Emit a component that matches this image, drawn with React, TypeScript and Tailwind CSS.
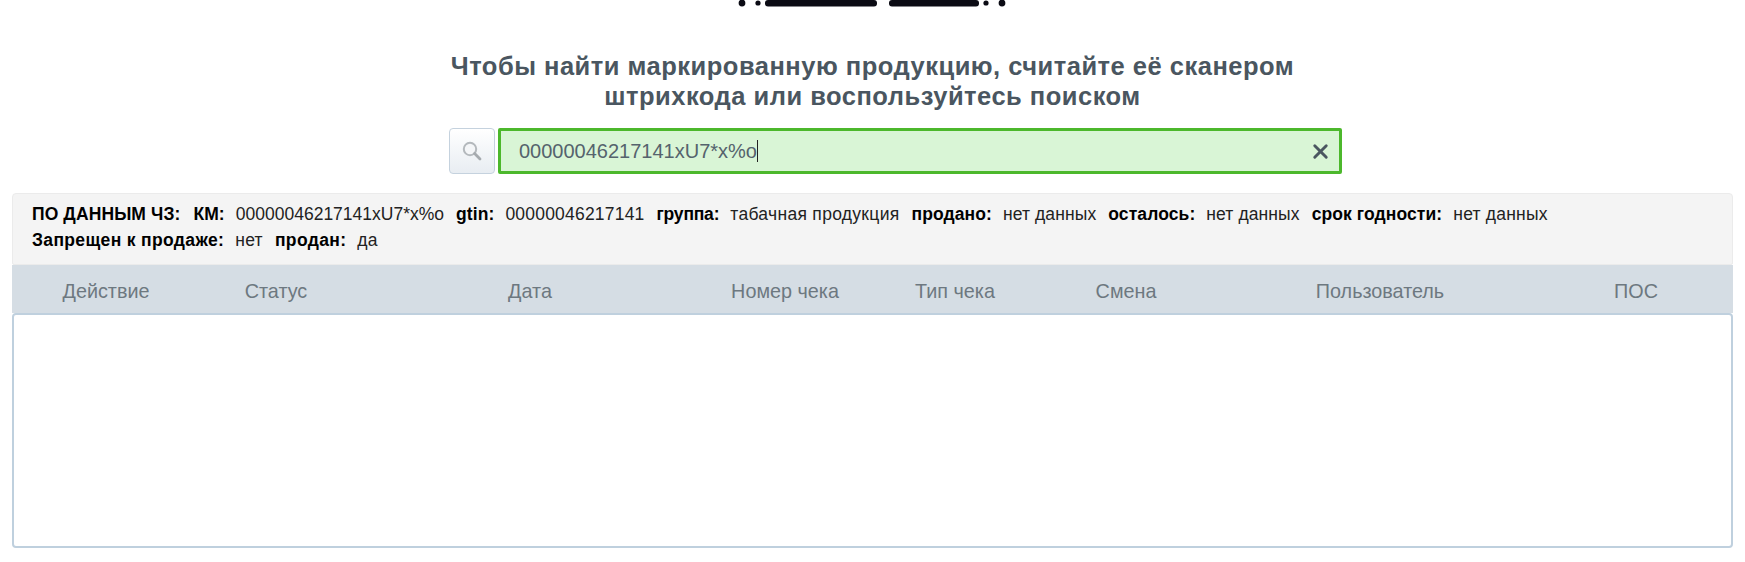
import { X } from "lucide-react";

const columns = ["Действие", "Статус", "Дата", "Номер чека", "Тип чека", "Смена", "Пользователь", "ПОС"];

const infoRow1 = [
  { label: "КМ:", value: "00000046217141xU7*x%o", valueClass: "tracking-[0px]" },
  { label: "gtin:", value: "00000046217141", valueClass: "tracking-[0.2px]" },
  { label: "группа:", value: "табачная продукция", valueClass: "tracking-[0.3px]", labelClass: "tracking-[-0.2px]" },
  { label: "продано:", value: "нет данных", valueClass: "tracking-[0.1px]" },
  { label: "осталось:", value: "нет данных", valueClass: "tracking-[0.1px]" },
  { label: "срок годности:", value: "нет данных", valueClass: "tracking-[0.2px]" },
];

const infoRow2 = [
  { label: "Запрещен к продаже:", value: "нет", valueClass: "tracking-[0.3px]" },
  { label: "продан:", value: "да", valueClass: "tracking-[0.3px]" },
];

function Logo() {
  return (
    <svg width="270" height="7" viewBox="0 0 270 7" className="mx-auto block">
      <circle cx="4" cy="3" r="3.4" fill="#0b0b14" />
      <circle cx="20" cy="3" r="2.6" fill="#0b0b14" />
      <rect x="27" y="0" width="112" height="6.4" rx="3" fill="#0b0b14" />
      <rect x="151" y="0" width="90" height="6.4" rx="3" fill="#0b0b14" />
      <circle cx="248" cy="3" r="2.6" fill="#0b0b14" />
      <circle cx="264" cy="3" r="3.4" fill="#0b0b14" />
    </svg>
  );
}

function Pair({ label, value, valueClass, labelClass }: { label: string; value: string; valueClass: string; labelClass?: string }) {
  return (
    <span className="mr-[12px]">
      <b className={`mr-[11px] font-bold text-black ${labelClass ?? ""}`}>{label}</b>
      <span className={valueClass}>{value}</span>
    </span>
  );
}

export default function App() {
  return (
    <div className="h-[562px] overflow-hidden bg-white font-['Liberation_Sans',Arial,sans-serif]">
      <Logo />
      <h2 className="mt-[44px] text-center text-[25.5px] leading-[30px] font-bold tracking-[0.5px] text-[#4a5660]">
        Чтобы найти маркированную продукцию, считайте её сканером
        <br />
        штрихкода или воспользуйтесь поиском
      </h2>

      <div className="mt-[17px] flex justify-center gap-[3px] pl-[46px]">
        <button className="flex h-[46px] w-[46px] items-center justify-center rounded-[4px] border border-[#c5d2de] bg-gradient-to-b from-[#ffffff] to-[#e8edf2]">
          <svg width="22" height="22" viewBox="0 0 22 22" fill="none">
            <circle cx="9" cy="9" r="6.2" stroke="#b4b9bd" strokeWidth="2" fill="#f4f6f8" />
            <path d="M13.6 13.6L19 19" stroke="#a6abaf" strokeWidth="2.8" strokeLinecap="round" />
          </svg>
        </button>
        <div className="flex h-[46px] w-[844px] items-center rounded-[2px] border-[3px] border-[#4cb82c] bg-[#d9f5d6] pl-[18px] pr-[7px]">
          <span className="text-[20px] leading-none text-[#55636d]">00000046217141xU7*x%o</span>
          <span className="h-[22px] w-px bg-[#222222]" />
          <X size={23} strokeWidth={3} className="ml-auto text-[#4a5660]" />
        </div>
      </div>

      <div className="mx-[12px] mt-[19px] h-[72px] rounded-t-[4px] rounded-b-[2px] border border-[#ebebeb] bg-[#f4f4f4] pl-[19px] pt-[7px] text-[17.5px] leading-[26px] text-[#222222]">
        <div className="whitespace-nowrap tracking-[0.1px]">
          <b className="mr-[13px] font-bold text-black">ПО ДАННЫМ ЧЗ:</b>
          {infoRow1.map((item) => (
            <Pair key={item.label} {...item} />
          ))}
        </div>
        <div className="whitespace-nowrap tracking-[0.35px]">
          {infoRow2.map((item) => (
            <Pair key={item.label} {...item} />
          ))}
        </div>
      </div>

      <div className="mx-[12px] grid h-[48px] grid-cols-[188px_152px_356px_154px_186px_156px_352px_160px] items-center bg-[#d5dde4] pr-[16px] pt-[6px] text-[19.8px] text-[#6d7880]">
        {columns.map((name) => (
          <div key={name} className="text-center">
            {name}
          </div>
        ))}
      </div>
      <div className="mx-[12px] h-[235px] rounded-[4px] border-2 border-[#bfd0de] bg-white" />
    </div>
  );
}
